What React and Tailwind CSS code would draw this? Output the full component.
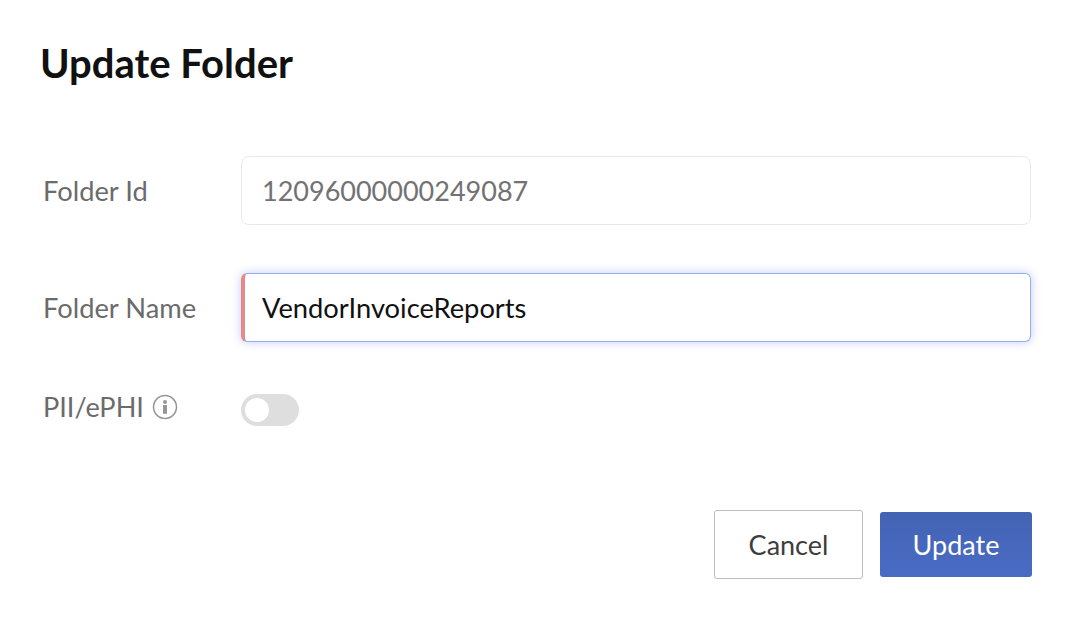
const Label = ({ children }) => (
  <label className="block w-[198px] pt-[2px] text-[27.3px] text-[#6b6b6b]">{children}</label>
);

const UpdateFolder = () => {
  return (
    <div className="h-[617px] w-[1071px] overflow-hidden bg-white pl-[40px] pr-[40px] font-['Lato',sans-serif]">
      <h1 className="pt-[37px] text-[40px] leading-[52px] font-bold text-[#111111]">Update Folder</h1>

      {/* Form rows */}
      <div className="mt-[67px] flex items-center pl-[3px]">
        <Label>Folder Id</Label>
        <div className="flex h-[69px] w-[790px] items-center rounded-[8px] border border-[#e8e8e8] pt-[2px] pl-[20px] text-[27px] text-[#727272]">
          12096000000249087
        </div>
      </div>

      <div className="mt-[48px] flex items-center pl-[3px]">
        <Label>Folder Name</Label>
        <div className="flex h-[69px] w-[790px] items-center rounded-[6px] border border-[#94aeee] border-l-[4px] border-l-[#e58a8a] pt-[2px] pl-[17px] text-[27.3px] text-[#111111] shadow-[0_0_10px_rgba(92,124,230,0.4)]">
          VendorInvoiceReports
        </div>
      </div>

      <div className="mt-[45px] flex items-center pl-[3px]">
        <div className="mb-[6px] flex w-[198px] items-center gap-[8px] text-[27.1px] text-[#6b6b6b]">
          <span>PII/ePHI</span>
          <svg width="26" height="26" viewBox="0 0 26 26" fill="none">
            <circle cx="13" cy="13" r="11.5" stroke="#969696" strokeWidth="1.5" />
            <circle cx="13" cy="7.9" r="2" fill="#969696" />
            <rect x="11" y="11" width="4" height="8.8" fill="#969696" />
          </svg>
        </div>
        <div className="flex h-[32px] w-[58px] items-center rounded-full bg-[#dedede] pl-[4px]">
          <div className="h-[24px] w-[24px] rounded-full bg-white" />
        </div>
      </div>

      {/* Buttons */}
      <div className="mt-[76px] flex items-center justify-end gap-[17px]">
        <button className="h-[69px] w-[149px] rounded-[3px] border border-[#bdbdbd] bg-white pt-[2px] text-[27px] text-[#3d3d3d]">
          Cancel
        </button>
        <button className="mr-[-1px] h-[65px] w-[152px] rounded-[3px] bg-gradient-to-b from-[#4364b3] to-[#4a6bc4] pt-[2px] text-[27px] text-white">
          Update
        </button>
      </div>
    </div>
  );
};

export default UpdateFolder;
